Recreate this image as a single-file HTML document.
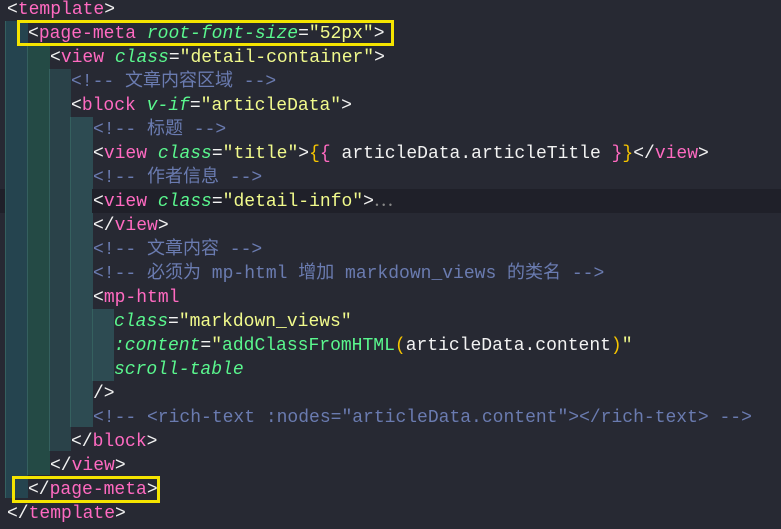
<!DOCTYPE html>
<html><head><meta charset="utf-8"><style>
body{margin:0;width:781px;height:529px;background:#272933;overflow:hidden;position:relative;font-family:"Liberation Mono","Noto Sans CJK SC",monospace;font-size:18px}
.l{position:absolute;left:7px;height:24px;line-height:24px;white-space:pre;color:#f2f2f2}
.t{color:#ff6ac1}.a{color:#5af78e;font-style:italic}.s{color:#f1fa8c}.c{color:#6a7bb0}.y{color:#f5c400}.f{color:#5af78e}
.g{position:absolute;border-left:1px solid #35605f}
.hl{position:absolute;left:0;top:189px;width:781px;height:24px;background:#1f2029}
.box{position:absolute;border:3px solid #f5e400;box-sizing:border-box}
.w{position:absolute;top:-2px;left:0;width:781px;height:529px}
</style></head><body>
<div class="hl"></div>
<div class="g" style="left:5px;top:21px;width:22px;height:477px;background:#25444f"></div>
<div class="g" style="left:27px;top:45px;width:22px;height:430px;background:#244a45"></div>
<div class="g" style="left:49px;top:69px;width:21px;height:382px;background:#2a4249"></div>
<div class="g" style="left:70px;top:117px;width:22px;height:310px;background:#2d4b52"></div>
<div class="g" style="left:92px;top:309px;width:21px;height:72px;background:#2d4b52"></div>
<div class="hl" style="left:92px;width:689px"></div>
<div class="w">
<div class="l" style="top:0px">&lt;<span class="t">template</span>&gt;</div>
<div class="l" style="top:24px;left:28px">&lt;<span class="t">page-meta</span> <span class="a">root-font-size</span>=<span class="s">"52px"</span>&gt;</div>
<div class="l" style="top:48px;left:50px">&lt;<span class="t">view</span> <span class="a">class</span>=<span class="s">"detail-container"</span>&gt;</div>
<div class="l c" style="top:72px;left:71px">&lt;!-- 文章内容区域 --&gt;</div>
<div class="l" style="top:96px;left:71px">&lt;<span class="t">block</span> <span class="a">v-if</span>=<span class="s">"articleData"</span>&gt;</div>
<div class="l c" style="top:120px;left:93px">&lt;!-- 标题 --&gt;</div>
<div class="l" style="top:144px;left:93px">&lt;<span class="t">view</span> <span class="a">class</span>=<span class="s">"title"</span>&gt;<span class="y">{</span><span class="t">{</span> articleData.articleTitle <span class="t">}</span><span class="y">}</span>&lt;/<span class="t">view</span>&gt;</div>
<div class="l c" style="top:168px;left:93px">&lt;!-- 作者信息 --&gt;</div>
<div class="l" style="top:192px;left:93px">&lt;<span class="t">view</span> <span class="a">class</span>=<span class="s">"detail-info"</span>&gt;<span style="color:#888">⋯</span></div>
<div class="l" style="top:216px;left:93px">&lt;/<span class="t">view</span>&gt;</div>
<div class="l c" style="top:240px;left:93px">&lt;!-- 文章内容 --&gt;</div>
<div class="l c" style="top:264px;left:93px">&lt;!-- 必须为 mp-html 增加 markdown_views 的类名 --&gt;</div>
<div class="l" style="top:288px;left:93px">&lt;<span class="t">mp-html</span></div>
<div class="l" style="top:312px;left:114px"><span class="a">class</span>=<span class="s">"markdown_views"</span></div>
<div class="l" style="top:336px;left:114px"><span class="a">:content</span>=<span class="s">"</span><span class="f">addClassFromHTML</span><span class="y">(</span>articleData.content<span class="y">)</span><span class="s">"</span></div>
<div class="l" style="top:360px;left:114px"><span class="a">scroll-table</span></div>
<div class="l" style="top:384px;left:93px">/&gt;</div>
<div class="l c" style="top:408px;left:93px">&lt;!-- &lt;rich-text :nodes="articleData.content"&gt;&lt;/rich-text&gt; --&gt;</div>
<div class="l" style="top:432px;left:71px">&lt;/<span class="t">block</span>&gt;</div>
<div class="l" style="top:456px;left:50px">&lt;/<span class="t">view</span>&gt;</div>
<div class="l" style="top:480px;left:28px">&lt;/<span class="t">page-meta</span>&gt;</div>
<div class="l" style="top:504px">&lt;/<span class="t">template</span>&gt;</div>
</div>
<div class="box" style="left:17px;top:20px;width:377px;height:26px"></div>
<div class="box" style="left:12px;top:476px;width:148px;height:27px"></div>
</body></html>
